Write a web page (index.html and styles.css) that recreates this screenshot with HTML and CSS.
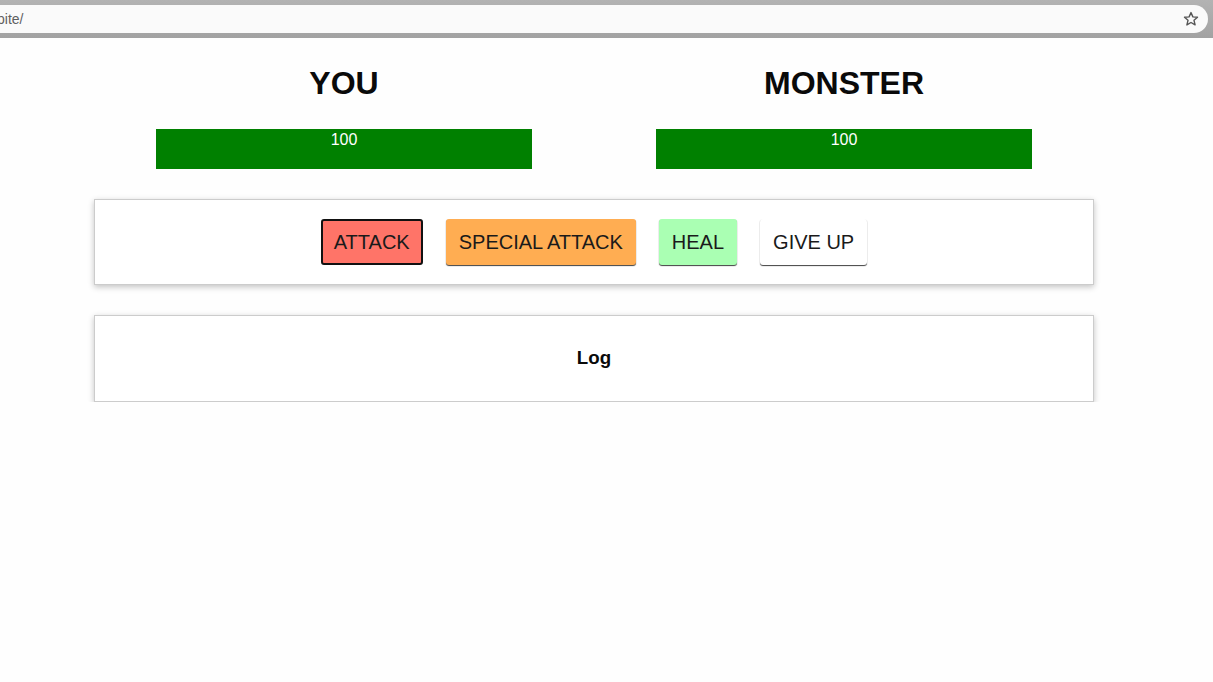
FILE: index.html
```
<!DOCTYPE html>
<html lang="en">
<head>
<meta charset="utf-8">
<title>Monster Slayer</title>
<link rel="stylesheet" href="styles.css">
</head>
<body>
<div class="chrome">
  <div class="urlbar">
    <span class="url">pite/</span>
    <svg class="star" width="16" height="16" viewBox="0 0 16 16" aria-hidden="true">
      <path d="M8 1.6 L9.9 5.9 L14.5 6.3 L11 9.3 L12.1 13.9 L8 11.5 L3.9 13.9 L5 9.3 L1.5 6.3 L6.1 5.9 Z" fill="none" stroke="#555" stroke-width="1.4" stroke-linejoin="round"/>
    </svg>
  </div>
</div>
<main class="app">
  <div class="fighters">
    <section class="fighter">
      <h1 class="name">YOU</h1>
      <div class="healthbar"><div class="healthfill" style="width: 100%">100</div></div>
    </section>
    <section class="fighter">
      <h1 class="name">MONSTER</h1>
      <div class="healthbar"><div class="healthfill" style="width: 100%">100</div></div>
    </section>
  </div>
  <section class="card controls">
    <button class="btn btn-attack">ATTACK</button>
    <button class="btn btn-special">SPECIAL ATTACK</button>
    <button class="btn btn-heal">HEAL</button>
    <button class="btn btn-giveup">GIVE UP</button>
  </section>
  <section class="card log">
    <h2 class="log-title">Log</h2>
  </section>
</main>
</body>
</html>
```
FILE: styles.css
```
* { box-sizing: border-box; }
html, body { margin: 0; padding: 0; background: #fefefe; }
body {
  font-family: "Liberation Sans", Arial, sans-serif;
  color: #111;
}
.chrome {
  height: 38px;
  background: linear-gradient(#b3b3b3, #a2a2a2);
  padding: 5px 5px 5px 0;
}
.urlbar {
  height: 28px;
  background: #fafafa;
  border-radius: 0 14px 14px 0;
  display: flex;
  align-items: center;
  justify-content: space-between;
  padding: 0 9px 0 0;
}
.url {
  font-size: 14px;
  color: #5f5f5f;
  margin-left: -3px;
}
.star { display: block; }
.app {
  width: 1000px;
  margin: 0 0 0 94px;
}
.fighters {
  display: grid;
  grid-template-columns: 500px 500px;
}
.fighter { text-align: center; }
.name {
  font-size: 32px;
  line-height: 36px;
  font-weight: bold;
  margin: 27px 0 28px;
  color: #0a0a0a;
}
.healthbar {
  width: 376px;
  height: 40px;
  margin: 0 auto;
  background: #fff;
}
.healthfill {
  height: 40px;
  background: #008000;
  color: #fff;
  font-size: 16px;
  line-height: 18px;
  padding-top: 2px;
  text-align: center;
}
.card {
  background: #fff;
  border: 1px solid #cccccc;
  box-shadow: 0 2px 6px rgba(0, 0, 0, 0.24);
  margin-top: 30px;
}
.controls {
  display: flex;
  justify-content: center;
  gap: 23px;
  padding: 19px;
}
.btn {
  font-family: "Liberation Sans", Arial, sans-serif;
  font-size: 20px;
  line-height: 22px;
  padding: 11px 12px;
  border: 1px solid transparent;
  border-radius: 3px;
  color: #1a1a1a;
  box-shadow: 0 1px 1px rgba(0, 0, 0, 0.75);
  cursor: pointer;
}
.btn-attack {
  background: #ff7468;
  border: 2px solid #111;
  padding: 10px 11px;
  box-shadow: none;
}
.btn-special { background: #ffad52; }
.btn-heal { background: #aaffb3; }
.btn-giveup { background: #fff; }
.log {
  padding: 31px 0 32px;
  text-align: center;
}
.log-title {
  margin: 0;
  font-size: 18.72px;
  line-height: 22px;
  font-weight: bold;
  color: #0a0a0a;
}
```
